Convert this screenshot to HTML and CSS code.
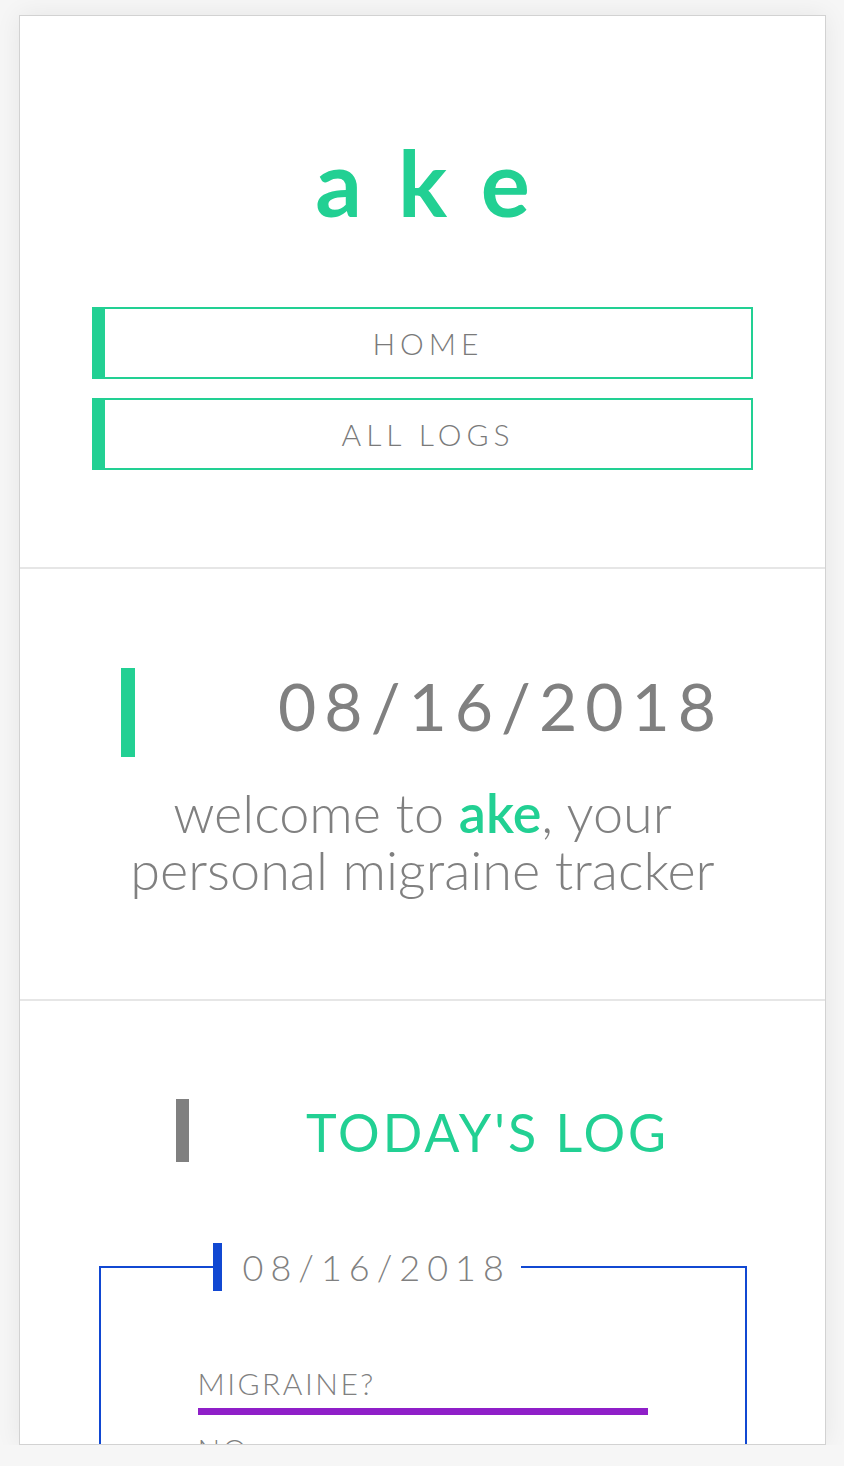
FILE: index.html
```html
<!DOCTYPE html>
<html lang="en">
<head>
<meta charset="utf-8">
<title>ake</title>
<link rel="stylesheet" href="styles.css">
</head>
<body>
<div class="frame">
  <header class="top">
    <h1 class="logo">ake</h1>
    <nav class="nav">
      <a class="nav-btn" href="#">HOME</a>
      <a class="nav-btn" href="#">ALL LOGS</a>
    </nav>
  </header>
  <section class="hero">
    <div class="date-row">
      <span class="bar bar-green"></span>
      <span class="big-date">08/16/2018</span>
    </div>
    <p class="welcome">welcome to <strong>ake</strong>, your personal migraine tracker</p>
  </section>
  <section class="log">
    <div class="log-head">
      <span class="bar bar-gray"></span>
      <h2 class="log-title">TODAY'S LOG</h2>
    </div>
    <fieldset class="card">
      <legend class="card-date">08/16/2018</legend>
      <div class="question">MIGRAINE?</div>
      <div class="answer">NO</div>
    </fieldset>
  </section>
</div>
</body>
</html>
```
FILE: styles.css
```css
body {
  margin: 0;
  background: #f6f6f6;
  font-family: Lato, "Open Sans", sans-serif;
  color: #808080;
}

.frame {
  margin: 15px 0 0 19px;
  width: 807px;
  height: 1430px;
  box-sizing: border-box;
  border: 1px solid #d2d2d2;
  background: #fff;
  overflow: hidden;
  box-shadow: 0 0 24px rgba(0, 0, 0, 0.07);
}

.top {
  padding: 120px 72px 97px;
  border-bottom: 2px solid #e6e6e6;
}

.logo {
  margin: 0;
  font-size: 92px;
  line-height: 92px;
  font-weight: 700;
  color: #22d093;
  text-align: center;
  letter-spacing: 36px;
  padding-left: 36px;
}

.nav {
  margin-top: 79px;
  display: flex;
  flex-direction: column;
  gap: 19px;
}

.nav-btn {
  height: 72px;
  box-sizing: border-box;
  border: 2px solid #22d093;
  border-left-width: 13px;
  display: flex;
  align-items: center;
  justify-content: center;
  font-size: 30px;
  font-weight: 300;
  letter-spacing: 5px;
  color: #7a7a7a;
  text-decoration: none;
}

.hero {
  padding: 99px 0 101px;
  border-bottom: 2px solid #e6e6e6;
}

.date-row {
  width: 603px;
  margin: 0 auto;
  display: flex;
  justify-content: space-between;
  align-items: flex-start;
}

.bar {
  display: block;
}

.bar-green {
  width: 14px;
  height: 89px;
  background: #22d093;
}

.big-date {
  margin-top: 5px;
  font-size: 66px;
  line-height: 66px;
  font-weight: 400;
  letter-spacing: 8px;
}

.welcome {
  width: 640px;
  margin: 27px auto 0;
  text-align: center;
  font-size: 54px;
  line-height: 57px;
  font-weight: 300;
}

.welcome strong {
  color: #22d093;
  font-weight: 600;
}

.log {
  padding-top: 98px;
}

.log-head {
  width: 493px;
  margin: 0 auto;
  display: flex;
  justify-content: space-between;
  align-items: flex-start;
}

.bar-gray {
  width: 13px;
  height: 63px;
  background: #808080;
}

.log-title {
  margin: 7px 0 0;
  font-size: 52px;
  line-height: 52px;
  font-weight: 400;
  letter-spacing: 3px;
  color: #22d093;
}

.card {
  width: 648px;
  box-sizing: border-box;
  margin: 81px auto 0;
  padding: 77px 97px 0;
  border: 2px solid #1148d2;
  min-width: 0;
}

.card-date {
  margin-left: 15px;
  padding: 0 10px 0 21px;
  border-left: 9px solid #1148d2;
  font-size: 36px;
  line-height: 48px;
  font-weight: 300;
  letter-spacing: 7px;
  color: #808080;
}

.question {
  font-size: 30px;
  line-height: 30px;
  font-weight: 300;
  letter-spacing: 2.5px;
  padding-bottom: 10px;
  border-bottom: 7px solid #8f1fc8;
}

.answer {
  margin-top: 19px;
  font-size: 30px;
  line-height: 30px;
  font-weight: 300;
  letter-spacing: 2.5px;
}
```
